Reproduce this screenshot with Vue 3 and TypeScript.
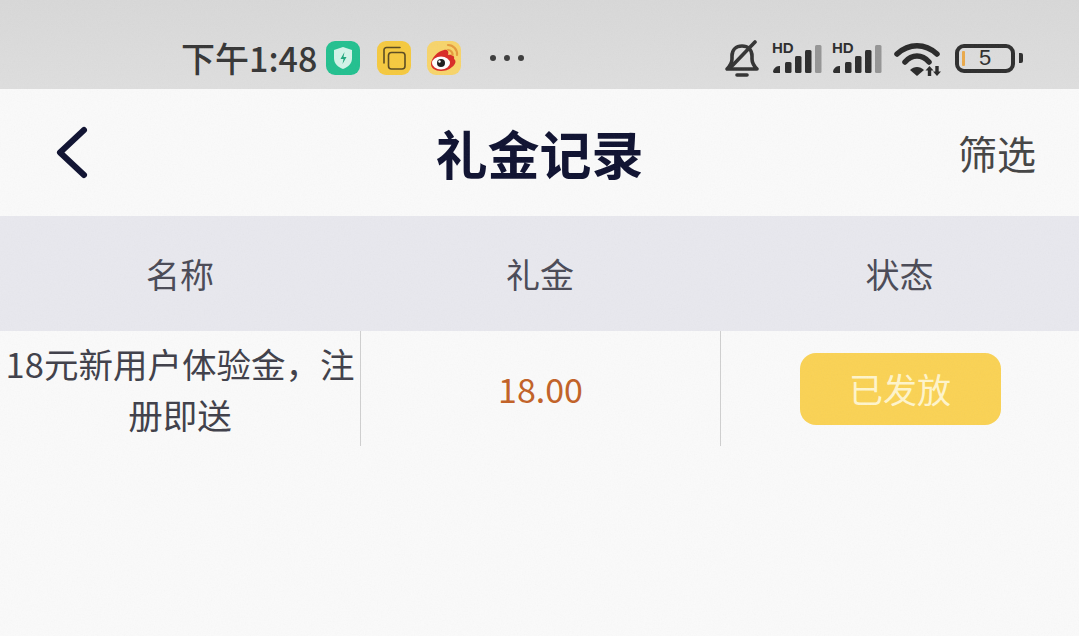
<script setup lang="ts">
const signals = [0, 1]
const bars = [
  { x: 13, top: 21 },
  { x: 23, top: 15 },
  { x: 33, top: 9 },
]
</script>

<template>
  <div class="page">
    <div class="status-bar">
      <div class="status-left">
        <span class="time">下午1:48</span>
        <span class="app-icon shield">
          <svg viewBox="0 0 34 34" width="34" height="34">
            <path d="M17 6l9 3v8c0 6-4 9-9 11-5-2-9-5-9-11V9z" fill="#d3f3e8" />
            <path d="M18.500 11l-4 7h3l-1 5 4-7h-3z" fill="#1fa77c" />
          </svg>
        </span>
        <span class="app-icon copy">
          <svg viewBox="0 0 34 34" width="34" height="34" fill="none" stroke="#5a4a20" stroke-width="1.600">
            <path d="M7 22V9a2.500 2.500 0 0 1 2.500-2.500H23" stroke-linecap="round" />
            <rect x="11.500" y="11.500" width="16.500" height="16.500" rx="3" />
          </svg>
        </span>
        <span class="app-icon weibo">
          <svg viewBox="0 0 34 34" width="34" height="34">
            <path d="M4 23c0-6 7-13 13-14 4-1 5 2 4 5 4-1 7 1 6 4 3 2 1 6-2 8-3 3-8 4-11 4-6 0-10-3-10-7z" fill="#d92b26" />
            <ellipse cx="14" cy="22" rx="9" ry="6.500" fill="#fff" />
            <circle cx="14" cy="22" r="4" fill="#1d1d1d" />
            <circle cx="12.500" cy="20.500" r="1.200" fill="#fff" />
            <path d="M21 4a9 9 0 0 1 9 10M21 9a4.500 4.500 0 0 1 4.500 5" fill="none" stroke="#e59a3c" stroke-width="2.200" stroke-linecap="round" />
          </svg>
        </span>
        <span class="dots"><i></i><i></i><i></i></span>
      </div>
      <div class="status-right">
        <svg class="bell" viewBox="0 0 36 37" width="36" height="37" fill="none" stroke="#333" stroke-width="3.600" stroke-linecap="round" stroke-linejoin="round">
          <path d="M3 29h30c-3-3-5-6-5-10v-3c0-6-4-10-10-10S8 10 8 16v3c0 4-2 7-5 10z" />
          <path d="M13 35h10" />
          <path d="M7 27L31 2" />
        </svg>
        <svg v-for="s in signals" :key="s" class="signal" viewBox="0 0 50 34" width="50" height="34">
          <text x="0" y="12" class="hd">HD</text>
          <path d="M1 31c0-3 3-6 6-6h1v7H2z" fill="#2c2c2c" />
          <rect v-for="b in bars" :key="b.x" :x="b.x" :y="b.top" width="6.500" :height="32 - b.top" rx="1.500" fill="#2c2c2c" />
          <rect x="43" y="4" width="6.500" height="28" rx="1.500" fill="#959595" />
        </svg>
        <svg class="wifi" viewBox="0 0 48 36" width="48" height="36" fill="none" stroke="#292929" stroke-width="5.500" stroke-linecap="round">
          <path d="M4 14C16 3 32 3 44 14" />
          <path d="M12 22C19 14 29 14 36 22" />
          <path d="M24 36L17 30C21 26 27 26 31 30z" fill="#292929" stroke="none" />
          <path d="M36.500 26l4 4.500h-2.300v5.500h-3.400v-5.500h-2.300z" fill="#292929" stroke="none" />
          <path d="M44 36l4-4.500h-2.300v-5.500h-3.400v5.500h-2.300z" fill="#292929" stroke="none" />
        </svg>
        <span class="battery">
          <span class="battery-level"></span>
          <span class="battery-num">5</span>
        </span>
        <span class="battery-cap"></span>
      </div>
    </div>

    <div class="nav-bar">
      <svg class="back" viewBox="0 0 36 56" width="36" height="56" fill="none" stroke="#0e1130" stroke-width="6" stroke-linecap="round" stroke-linejoin="round">
        <path d="M30 5L6 27.500 30 50" />
      </svg>
      <span class="title">礼金记录</span>
      <span class="filter">筛选</span>
    </div>

    <div class="table-head">
      <span>名称</span>
      <span>礼金</span>
      <span>状态</span>
    </div>
    <div class="table-row">
      <div class="cell name">18元新用户体验金，注册即送</div>
      <div class="cell amount">18.00</div>
      <div class="cell"><span class="badge">已发放</span></div>
    </div>

    <!-- paper grain of the photo over everything -->
    <svg class="grain" width="1079" height="636">
      <filter id="grain-noise">
        <feTurbulence type="fractalNoise" baseFrequency="0.7" numOctaves="2" seed="4" />
        <feColorMatrix type="saturate" values="0" />
      </filter>
      <rect width="1079" height="636" filter="url(#grain-noise)" />
    </svg>
  </div>
</template>

<style>
html, body { margin: 0; background: #fafafa; }
</style>

<style scoped>
.page {
  width: 1079px;
  height: 636px;
  overflow: hidden;
  position: relative;
  background: #fafafa;
  font-family: "Noto Sans CJK SC", "Noto Sans", sans-serif;
}

.grain {
  position: absolute;
  left: 0;
  top: 0;
  opacity: 0.05;
  pointer-events: none;
}

.status-bar {
  height: 89px;
  background: linear-gradient(#d8d8d8, #dedede);
  display: flex;
  align-items: center;
  justify-content: space-between;
  padding: 27px 56px 0 181px;
  box-sizing: border-box;
}

.status-left,
.status-right {
  display: flex;
  align-items: center;
}

.time {
  font-size: 34px;
  line-height: 40px;
  color: #363636;
  font-weight: 500;
  width: 136px;
  white-space: nowrap;
}

.app-icon {
  width: 34px;
  height: 34px;
  border-radius: 9px;
  display: block;
}
.app-icon svg { display: block; }

.shield { background: #22c08f; margin-left: 9px; margin-right: 17px; }
.copy { background: #f5c93f; margin-right: 16px; }
.weibo { background: #f7d46a; }

.dots {
  display: flex;
  gap: 8px;
  margin-left: 29px;
}
.dots i {
  width: 6px;
  height: 6px;
  border-radius: 50%;
  background: #3c3c3c;
  display: block;
}

.bell { margin-right: 12px; }
.signal { margin-right: 10px; overflow: visible; }
.hd {
  font-family: "Liberation Sans", sans-serif;
  font-size: 15px;
  font-weight: 700;
  fill: #2c2c2c;
}
.wifi { margin-left: 1px; margin-right: 14px; }

.battery {
  width: 60px;
  height: 29px;
  border: 4px solid #2e2e2e;
  border-radius: 9px;
  box-sizing: border-box;
  position: relative;
  display: flex;
  align-items: center;
  justify-content: center;
}
.battery-level {
  position: absolute;
  left: 3px;
  top: 3px;
  bottom: 3px;
  width: 3px;
  background: #eaa94a;
  border-radius: 1px;
}
.battery-num {
  font-family: "Liberation Sans", sans-serif;
  font-size: 22px;
  color: #2e2e2e;
  line-height: 1;
}
.battery-cap {
  width: 4px;
  height: 10px;
  background: #2e2e2e;
  border-radius: 0 2px 2px 0;
  margin-left: 4px;
}

.nav-bar {
  height: 127px;
  background: #fafafa;
  position: relative;
  display: flex;
  align-items: center;
  justify-content: center;
}
.back {
  position: absolute;
  left: 54px;
  top: 36px;
}
.title {
  font-size: 52px;
  font-weight: 700;
  color: #0e1130;
  line-height: 56px;
}
.filter {
  position: absolute;
  right: 43px;
  top: 37px;
  font-size: 39px;
  line-height: 52px;
  color: #444;
}

.table-head {
  height: 115px;
  background: #e8e8ee;
  display: grid;
  grid-template-columns: 360px 360px 1fr;
  align-items: center;
  text-align: center;
  font-size: 34px;
  color: #4a4a56;
}

.table-row {
  display: grid;
  grid-template-columns: 361px 360px 1fr;
  height: 115px;
}
.cell {
  display: flex;
  align-items: center;
  justify-content: center;
  text-align: center;
  border-right: 1px solid #cfcfcf;
}
.cell:last-child { border-right: none; }
.name {
  font-size: 34.500px;
  line-height: 51px;
  color: #3f3f49;
}
.amount {
  font-size: 34px;
  color: #c26126;
}
.badge {
  width: 201px;
  height: 72px;
  border-radius: 16px;
  background: #fad254;
  color: #fff5cc;
  font-size: 34px;
  display: flex;
  align-items: center;
  justify-content: center;
}
</style>
